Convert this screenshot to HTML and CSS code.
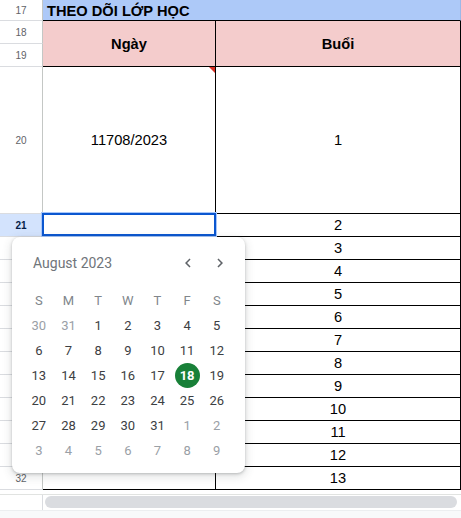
FILE: index.html
```html
<!DOCTYPE html>
<html lang="vi">
<head>
<meta charset="utf-8">
<title>Theo dõi lớp học</title>
<link rel="stylesheet" href="styles.css">
</head>
<body>
<div class="page">
  <div class="sheet">
    <div class="rh">17</div><div class="c title">THEO DÕI LỚP HỌC</div>
    <div class="rh">18</div><div class="c hdr">Ngày</div><div class="c hdr colb">Buổi</div>
    <div class="rh">19</div>
    <div class="rh">20</div><div class="c cola big">11708/2023<span class="note"></span></div><div class="c colb">1</div>
    <div class="rh sel">21</div><div class="c cola"></div><div class="c colb">2</div>
    <div class="rh">22</div><div class="c cola"></div><div class="c colb">3</div>
    <div class="rh">23</div><div class="c cola"></div><div class="c colb">4</div>
    <div class="rh">24</div><div class="c cola"></div><div class="c colb">5</div>
    <div class="rh">25</div><div class="c cola"></div><div class="c colb">6</div>
    <div class="rh">26</div><div class="c cola"></div><div class="c colb">7</div>
    <div class="rh">27</div><div class="c cola"></div><div class="c colb">8</div>
    <div class="rh">28</div><div class="c cola"></div><div class="c colb">9</div>
    <div class="rh">29</div><div class="c cola"></div><div class="c colb">10</div>
    <div class="rh">30</div><div class="c cola"></div><div class="c colb">11</div>
    <div class="rh">31</div><div class="c cola"></div><div class="c colb">12</div>
    <div class="rh">32</div><div class="c cola"></div><div class="c colb">13</div>
  </div>
  <div class="gap"></div>
  <div class="hscroll">
    <div class="stub"></div>
    <div class="track"><div class="thumb"></div></div>
  </div>
  <div class="footer"></div>

  <div class="selbox"></div>

  <div class="picker">
    <div class="picker-head">
      <span class="month">August 2023</span>
      <div class="nav">
        <svg class="chev" viewBox="0 0 24 24" width="18" height="18"><path d="M15.41 7.41L14 6l-6 6 6 6 1.41-1.41L10.83 12z"/></svg>
        <svg class="chev" viewBox="0 0 24 24" width="18" height="18"><path d="M10 6L8.59 7.41 13.17 12l-4.58 4.59L10 18l6-6z"/></svg>
      </div>
    </div>
    <div class="days">
      <span class="wd">S</span><span class="wd">M</span><span class="wd">T</span><span class="wd">W</span><span class="wd">T</span><span class="wd">F</span><span class="wd">S</span>
      <span class="d out">30</span><span class="d out">31</span><span class="d">1</span><span class="d">2</span><span class="d">3</span><span class="d">4</span><span class="d">5</span>
      <span class="d">6</span><span class="d">7</span><span class="d">8</span><span class="d">9</span><span class="d">10</span><span class="d">11</span><span class="d">12</span>
      <span class="d">13</span><span class="d">14</span><span class="d">15</span><span class="d">16</span><span class="d">17</span><span class="d"><b class="today">18</b></span><span class="d">19</span>
      <span class="d">20</span><span class="d">21</span><span class="d">22</span><span class="d">23</span><span class="d">24</span><span class="d">25</span><span class="d">26</span>
      <span class="d">27</span><span class="d">28</span><span class="d">29</span><span class="d">30</span><span class="d">31</span><span class="d out">1</span><span class="d out">2</span>
      <span class="d out">3</span><span class="d out">4</span><span class="d out">5</span><span class="d out">6</span><span class="d out">7</span><span class="d out">8</span><span class="d out">9</span>
    </div>
  </div>
</div>
</body>
</html>
```

FILE: styles.css
```css
* { box-sizing: border-box; }
html, body { margin: 0; padding: 0; background: #fff; }
body { font-family: "Liberation Sans", Arial, sans-serif; color: #000; }

.page { position: relative; width: 461px; height: 518px; overflow: hidden; }

.sheet {
  display: grid;
  grid-template-columns: 43px 173px 245px;
  grid-template-rows: 21px 23px 23px 147px repeat(12, 23px);
}

.rh {
  grid-column: 1;
  display: flex;
  align-items: center;
  justify-content: center;
  font-size: 10px;
  color: #5f6368;
  border-right: 1px solid #c4c7c5;
  border-bottom: 1px solid #dadce0;
}
.rh.sel { background: #d3e3fd; color: #041e49; font-weight: bold; }

.c {
  display: flex;
  align-items: center;
  justify-content: center;
  font-size: 14.67px;
  border-bottom: 1px solid #000;
  border-right: 1px solid #000;
}
.title {
  grid-column: 2 / span 2;
  justify-content: flex-start;
  padding-left: 4px;
  padding-top: 1px;
  background: #adc9f8;
  font-weight: bold;
  border-right-color: #9db8e8;
}
.hdr {
  grid-row: span 2;
  background: #f4cccc;
  font-weight: bold;
}
.cola { grid-column: 2; }
.colb { grid-column: 3; }
.big { position: relative; }
.note {
  position: absolute;
  top: 0;
  right: 0;
  width: 0;
  height: 0;
  border-top: 6px solid #d93025;
  border-left: 6px solid transparent;
}

.gap { height: 4px; }
.hscroll {
  display: flex;
  height: 16px;
  border-top: 1px solid #e1e3e1;
}
.stub { width: 43px; border-right: 1px solid #dadce0; }
.track { flex: 1; padding: 1px 4px 0 2px; }
.thumb { height: 12px; border-radius: 6px; background: #dadce0; }
.footer { height: 8px; background: #f8f9fa; border-top: 1px solid #eceef0; }

.selbox {
  position: absolute;
  left: 42px;
  top: 213px;
  width: 174px;
  height: 23px;
  border: 2px solid #0b57d0;
  box-shadow: 0 0 0 1px #a8c7fa;
}

.picker {
  position: absolute;
  left: 12px;
  top: 237px;
  width: 233px;
  height: 236px;
  padding: 14px 14px 10px 12px;
  background: #fff;
  border-radius: 8px;
  box-shadow: 0 1px 3px rgba(60, 64, 67, 0.3), 0 3px 8px 2px rgba(60, 64, 67, 0.12);
  font-family: Roboto, "Noto Sans", sans-serif;
}
.picker-head {
  display: flex;
  align-items: center;
  justify-content: space-between;
  height: 24px;
  padding-left: 9px;
  padding-right: 2px;
}
.month { font-size: 14px; color: #70757a; }
.nav { display: flex; gap: 14px; }
.chev { display: block; fill: #5f6368; }

.days {
  display: grid;
  grid-template-columns: repeat(7, 29.67px);
  grid-auto-rows: 25px;
  margin-top: 13px;
}
.wd, .d {
  display: flex;
  align-items: center;
  justify-content: center;
  font-size: 13px;
}
.wd { color: #80868b; }
.d { color: #3c4043; }
.d.out { color: #9aa0a6; }
.today {
  display: flex;
  align-items: center;
  justify-content: center;
  width: 25px;
  height: 25px;
  border-radius: 50%;
  background: #188038;
  color: #fff;
  font-weight: bold;
}
```
